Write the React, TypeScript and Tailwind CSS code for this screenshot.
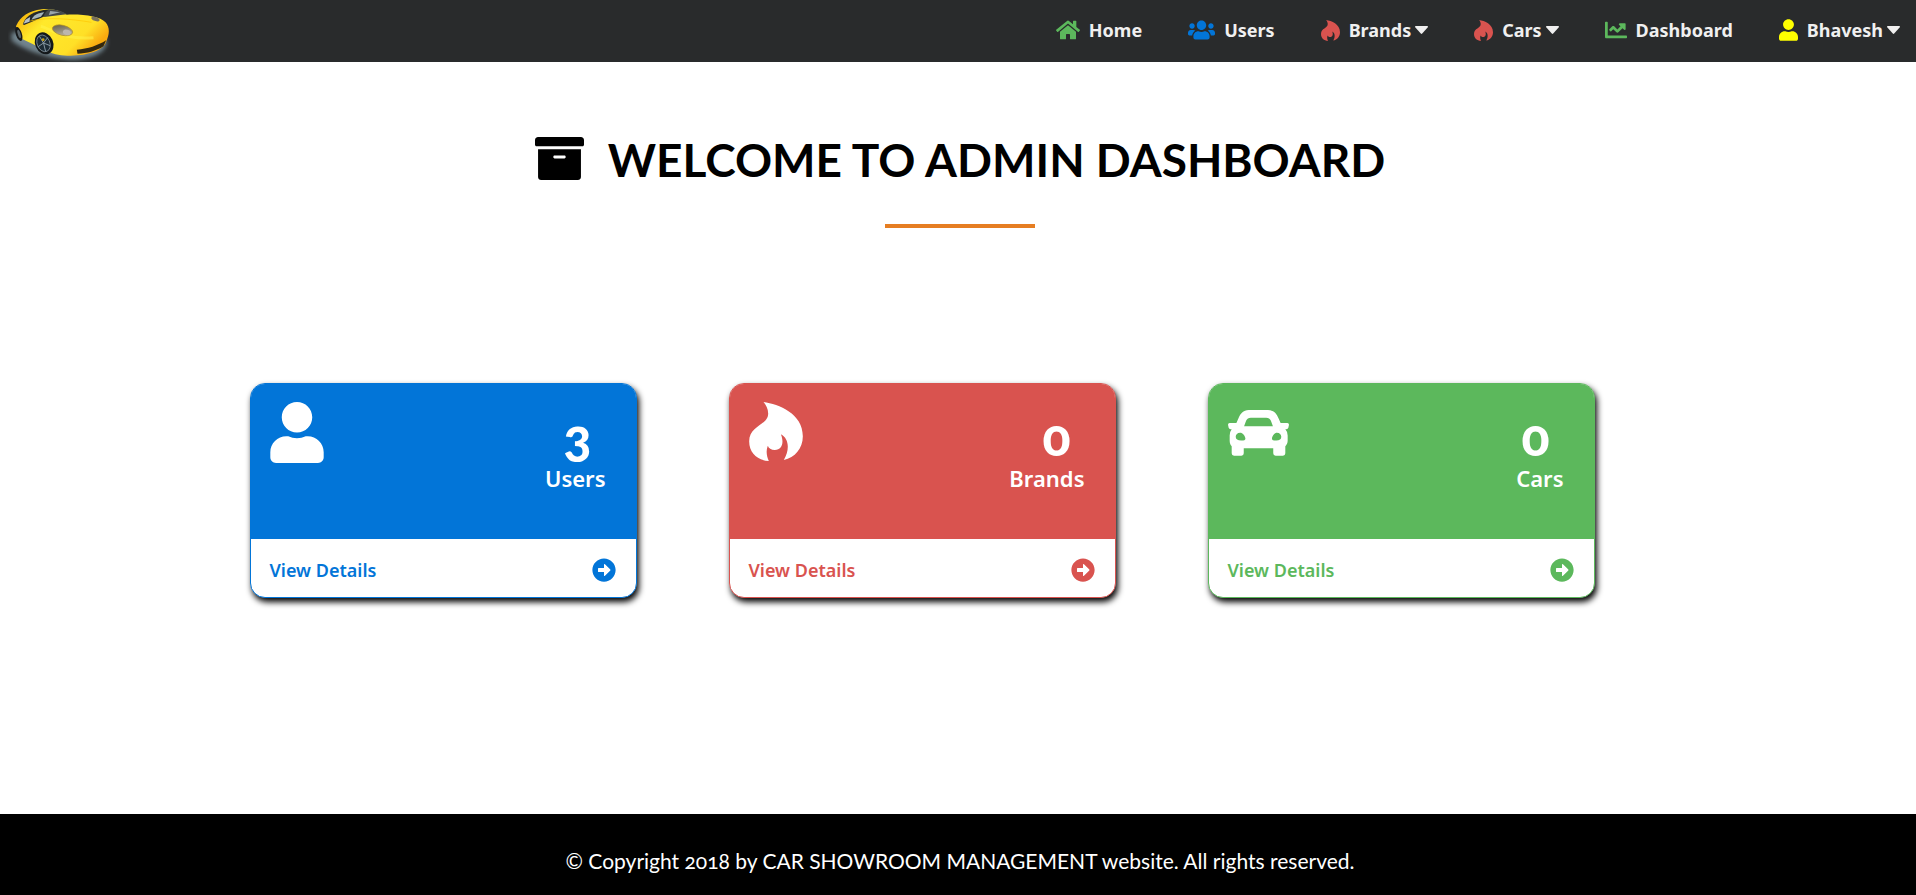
import type { ComponentType, ReactNode } from "react";
import { FaArchive, FaArrowAltCircleRight, FaChartLine, FaHome, FaUser, FaUsers } from "react-icons/fa";

type IconProps = { className?: string };

function Flame({ className }: IconProps) {
  return (
    <svg viewBox="99 96 161 177" className={className} fill="currentColor" aria-hidden="true">
      <path d="M142 96C188 103 260 130 260 199C260 236 236 263 203 270C221 240 219 206 194 193C204 216 199 240 176 240C165 240 157 234 155 227C149 241 151 258 158 273C125 271 99 250 99 214C99 165 157 166 156 130C156 116 149 104 142 96Z" />
    </svg>
  );
}

function CarFront({ className }: IconProps) {
  return (
    <svg viewBox="110 96 182 182" className={className} fill="currentColor" aria-hidden="true">
      <path
        fillRule="evenodd"
        d="M172 120H229C247 120 255 131 261 145L267 159H287Q292 159 292 164L290 173Q289 177 284 177H281Q288 184 288 196V212Q288 219 284 224L281 228V249Q281 256 274 256H252Q245 256 245 249V234H157V249Q157 256 150 256H128Q121 256 121 249V228L118 224Q115 219 115 212V196Q115 184 121 177H118Q113 177 112 173L110 164Q110 159 115 159H135L141 145C147 131 155 120 172 120ZM178 143Q168 143 164 152L158 168H244L238 152Q234 143 224 143ZM146 188C138 188 133 193 133 200C133 208 139 211 149 211C158 211 162 210 162 205C160 196 154 188 146 188ZM256 188C249 188 243 196 241 205C241 210 245 211 254 211C264 211 269 208 269 200C269 193 264 188 256 188Z"
      />
    </svg>
  );
}

function Logo() {
  return (
    <svg viewBox="24 20 308 168" className="h-14 w-[103px]" role="img" aria-label="Car Showroom">
      <defs>
        <linearGradient id="paint" x1="0" y1="0" x2="1" y2="0.5">
          <stop offset="0" stopColor="#f5a400" />
          <stop offset="0.35" stopColor="#ffe92b" />
          <stop offset="0.8" stopColor="#ffe027" />
          <stop offset="1" stopColor="#f9ab10" />
        </linearGradient>
        <linearGradient id="lamp" x1="0" y1="0" x2="1" y2="1">
          <stop offset="0" stopColor="#57533f" />
          <stop offset="1" stopColor="#cfc6b2" />
        </linearGradient>
        <filter id="soft" x="-20%" y="-30%" width="140%" height="160%">
          <feGaussianBlur stdDeviation="6" />
        </filter>
      </defs>
      <path d="M34 98L60 92L320 118C322 150 290 174 220 178C150 180 60 145 34 120Z" fill="#71838c" filter="url(#soft)" />
      <path d="M48 76C62 48 84 32 125 27C152 24 180 30 200 43C250 41 300 48 316 66C330 82 328 102 318 124C310 146 280 160 232 165C200 168 165 164 146 154L66 116C50 108 46 92 48 76Z" fill="url(#paint)" />
      <path d="M68 72C74 52 92 36 130 29L148 27L142 44L106 60L72 74Z" fill="#24282a" />
      <path d="M94 58C100 44 116 37 132 36L122 49Z" fill="#a5b4bb" />
      <path d="M148 27C170 27 188 34 200 42L132 50C130 42 138 32 148 27Z" fill="#45494a" />
      <path d="M150 32L180 36L146 44Z" fill="#9ba6ab" />
      <path d="M70 70L76 58L90 50L88 64Z" fill="#b7c0c3" />
      <path d="M90 62C140 50 210 55 274 66" stroke="#ffc400" strokeWidth="2" fill="none" />
      <path d="M122 78C160 88 190 120 280 112" stroke="#fff44a" strokeWidth="9" fill="none" opacity="0.55" />
      <ellipse cx="187" cy="90" rx="31" ry="15" fill="url(#lamp)" transform="rotate(14 187 90)" stroke="#a98a22" strokeWidth="2" />
      <ellipse cx="200" cy="96" rx="12" ry="8" fill="#bcb6ad" transform="rotate(14 200 96)" />
      <ellipse cx="286" cy="56" rx="13" ry="6" fill="#77705e" transform="rotate(22 286 56)" />
      <path d="M230 148C264 146 292 136 318 120L310 138C288 152 260 160 232 160Z" fill="#33280f" />
      <ellipse cx="56" cy="101" rx="9" ry="22" fill="#17191a" transform="rotate(-18 56 101)" />
      <ellipse cx="57" cy="101" rx="4" ry="13" fill="#59646a" transform="rotate(-18 57 101)" />
      <ellipse cx="132" cy="129" rx="27" ry="34" fill="#14181a" transform="rotate(-24 132 129)" />
      <ellipse cx="130" cy="129" rx="19" ry="26" fill="#1c2b35" stroke="#93a3ad" strokeWidth="2" transform="rotate(-24 130 129)" />
      <path d="M130 128L118 108M130 128L143 111M130 128L150 136M130 128L136 152M130 128L114 139" stroke="#8799a4" strokeWidth="3" />
      <circle cx="129" cy="118" r="4" fill="#c9a213" />
    </svg>
  );
}

function NavItem({ icon, label, menu }: { icon: ReactNode; label: string; menu?: boolean }) {
  const look = "flex cursor-pointer items-center font-['Noto_Sans',sans-serif] text-lg font-bold text-[#f0f0f0]";
  const content = (
    <>
      {icon}
      <span className="ml-[9px]">{label}</span>
      {menu && (
        <svg viewBox="0 0 13 8" className="ml-1 h-2 w-[13px]" fill="currentColor" aria-hidden="true">
          <path d="M0.6 0H12.4Q13.4 0.4 12.6 1.4L7.2 7.6Q6.5 8.2 5.8 7.6L0.4 1.4Q-0.4 0.4 0.6 0Z" />
        </svg>
      )}
    </>
  );
  return menu ? (
    <button type="button" className={look}>{content}</button>
  ) : (
    <a href="#" className={look}>{content}</a>
  );
}

type Card = {
  label: string;
  count: number;
  Icon: ComponentType<IconProps>;
  iconSize: string;
  border: string;
  fill: string;
  text: string;
};

const cards: Card[] = [
  { label: "Users", count: 3, Icon: FaUser, iconSize: "h-[61px] w-[54px]", border: "border-[#0275d8]", fill: "bg-[#0275d8]", text: "text-[#0275d8]" },
  { label: "Brands", count: 0, Icon: Flame, iconSize: "h-[59px] w-[54px]", border: "border-[#d9534f]", fill: "bg-[#d9534f]", text: "text-[#d9534f]" },
  { label: "Cars", count: 0, Icon: CarFront, iconSize: "h-[61px] w-[61px]", border: "border-[#5cb85c]", fill: "bg-[#5cb85c]", text: "text-[#5cb85c]" },
];

function StatCard({ label, count, Icon, iconSize, border, fill, text }: Card) {
  return (
    <article className={`overflow-hidden rounded-[15px] border bg-white shadow-[2px_4px_6px_#000] ${border}`}>
      <div className={`flex h-[155px] justify-between pt-[18px] pr-[30px] pl-[19px] text-white ${fill}`}>
        <Icon className={iconSize} />
        <div className="flex flex-col items-end pt-1 font-bold">
          <span className="pr-[14px] text-[52px] leading-[60px] font-black oldstyle-nums">{count}</span>
          <span className="font-['Noto_Sans',sans-serif] text-[22px] leading-6 font-semibold">{label}</span>
        </div>
      </div>
      <a href="#" className={`flex h-[58px] items-center justify-between pt-1 pr-5 pl-[19px] font-['Noto_Sans',sans-serif] text-lg font-semibold ${text}`}>
        View Details
        <FaArrowAltCircleRight className="size-6" />
      </a>
    </article>
  );
}

export default function App() {
  return (
    <div className="flex min-h-screen flex-col bg-white font-['Lato','Noto_Sans',sans-serif] text-black">
      <header className="flex h-[62px] items-center justify-between bg-[#292b2c] pr-4 pl-2">
        <a href="#" className="pt-2"><Logo /></a>
        <nav className="flex items-center gap-[46px] pb-[2px]">
          <NavItem label="Home" icon={<FaHome className="h-[22px] w-6 text-[#5cb85c]" />} />
          <NavItem label="Users" icon={<FaUsers className="h-[22px] w-[27px] text-[#0275d8]" />} />
          <NavItem label="Brands" menu icon={<Flame className="h-[21px] w-[19px] text-[#d9534f]" />} />
          <NavItem label="Cars" menu icon={<Flame className="h-[21px] w-[19px] text-[#d9534f]" />} />
          <NavItem label="Dashboard" icon={<FaChartLine className="size-[22px] text-[#5cb85c]" />} />
          <NavItem label="Bhavesh" menu icon={<FaUser className="h-[22px] w-[19px] text-[#ffff00]" />} />
        </nav>
      </header>
      <main className="grow pb-10">
        <div className="pl-1">
          <h1 className="flex items-center justify-center gap-6 pt-[68px] text-[46px] leading-[60px] font-bold">
            <FaArchive className="mb-1 size-[49px]" />
            WELCOME TO ADMIN DASHBOARD
          </h1>
          <div className="mx-auto mt-[34px] h-1 w-[150px] bg-[#e67e22]" />
        </div>
        <section className="mx-auto mt-[155px] grid w-3/4 grid-cols-3">
          {cards.map((card) => (
            <div key={card.label} className="pr-[82px] pl-[10px]">
              <StatCard {...card} />
            </div>
          ))}
        </section>
      </main>
      <footer className="flex h-[81px] items-center justify-center bg-black pt-3 pl-1 text-[21px] text-white oldstyle-nums">
        © Copyright 2018 by CAR SHOWROOM MANAGEMENT website. All rights reserved.
      </footer>
    </div>
  );
}
